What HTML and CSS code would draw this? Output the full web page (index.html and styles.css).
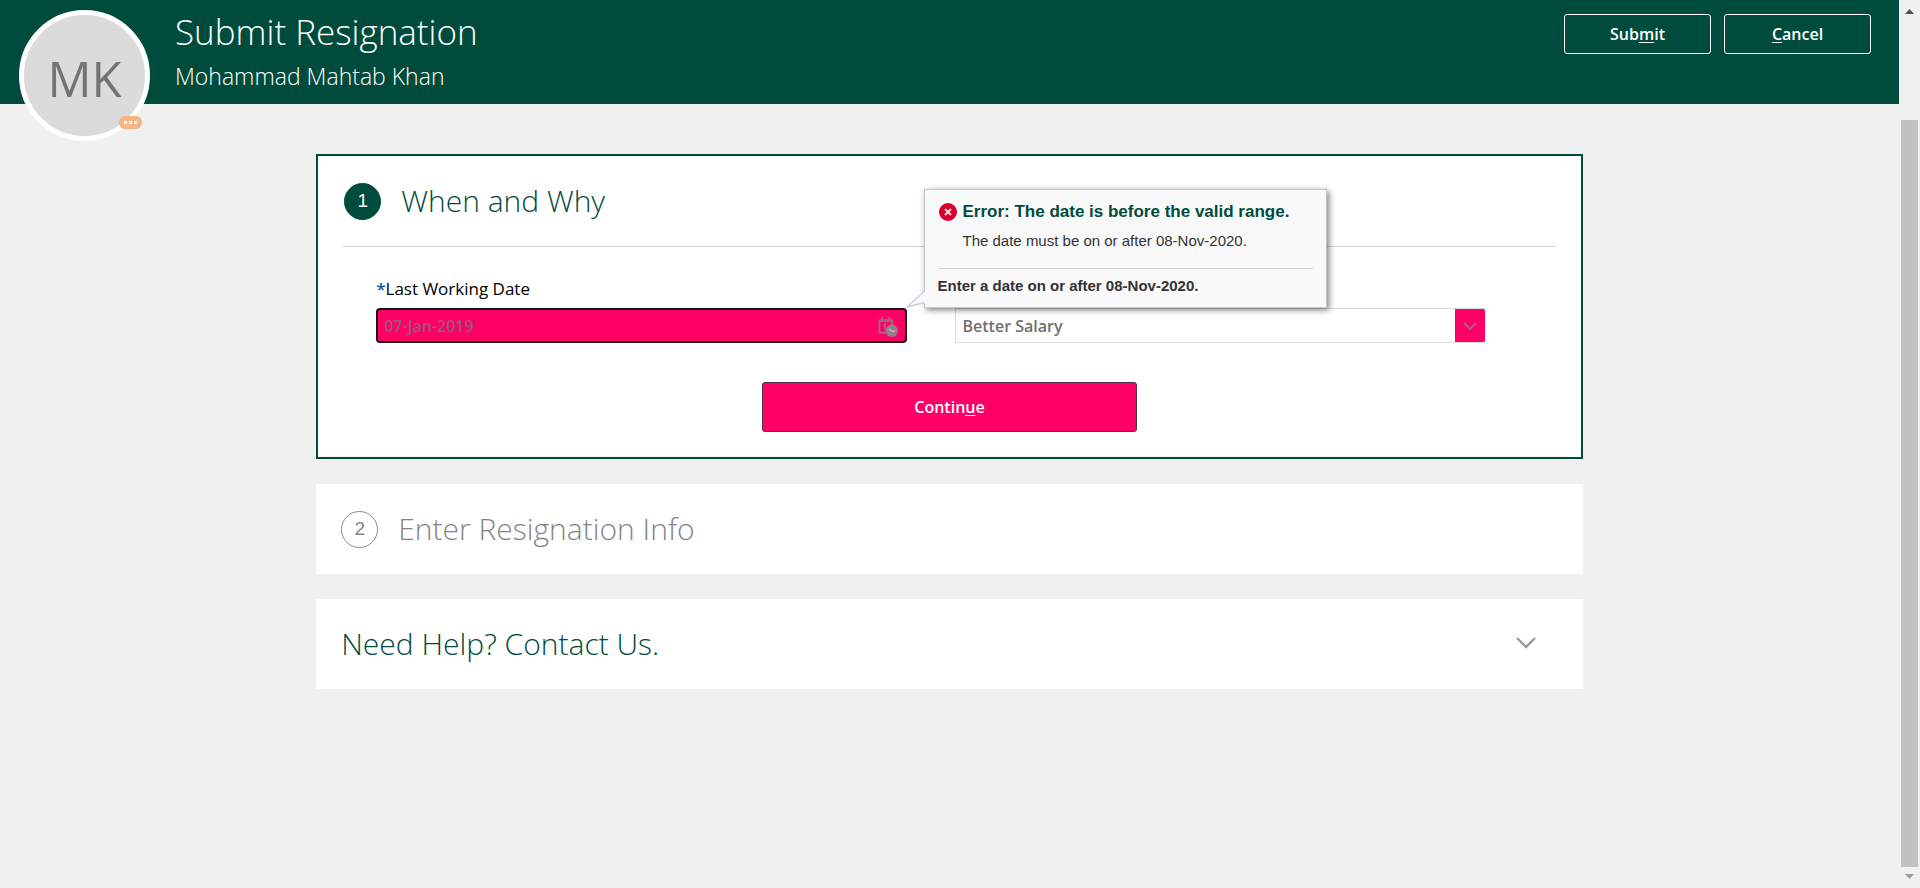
FILE: index.html
```html
<!DOCTYPE html>
<html lang="en">
<head>
<meta charset="utf-8">
<title>Submit Resignation</title>
<link rel="stylesheet" href="styles.css">
</head>
<body>
<div class="page">
  <header class="header">
    <div class="avatar">
      <span class="initials">MK</span>
      <button class="avatar-more" type="button" aria-label="More actions"><i></i><i></i><i></i></button>
    </div>
    <div class="titles">
      <h1 class="title">Submit Resignation</h1>
      <p class="person">Mohammad Mahtab Khan</p>
    </div>
    <div class="actions">
      <button class="action" type="button"><span>Sub<u>m</u>it</span></button>
      <button class="action" type="button"><span><u>C</u>ancel</span></button>
    </div>
  </header>

  <main class="content">
    <section class="card card-active">
      <div class="step-head">
        <span class="step-number step-number-active">1</span>
        <h2 class="step-title">When and Why</h2>
      </div>
      <form class="form">
        <div class="fields">
          <div class="field">
            <label class="label" for="last-date"><span class="required">*</span>Last Working Date</label>
            <div class="date-box">
              <input class="date-input" id="last-date" type="text" value="07-Jan-2019">
              <button class="date-button" type="button" aria-label="Select date">
                <svg width="21" height="21" viewBox="0 0 22 22" fill="none">
                  <path d="M2.500 4.500h13.500v13H2.500z" stroke="#a4637f" stroke-width="2"/>
                  <path d="M2 5h14.500" stroke="#a4637f" stroke-width="3"/>
                  <path d="M5.500 1v4M12.500 1v4" stroke="#a4637f" stroke-width="2.500"/>
                  <path d="M6.500 10l2-1.300V15" stroke="#a4637f" stroke-width="1.800"/>
                  <circle cx="15.500" cy="15.500" r="6.500" fill="#8d8088"/>
                  <path d="M12.500 13.500l3 2.500h3.500" stroke="#d9a9bd" stroke-width="1.500"/>
                </svg>
              </button>
              <div class="popover" role="alert">
                <svg class="popover-tip" width="20" height="18" viewBox="0 0 20 18">
                  <path d="M19 1L1 17.500L19 13z" fill="#f9f9fa"/>
                  <path d="M18.500 1L1 17L18.500 12.500" fill="none" stroke="#c8d0da" stroke-width="1.300"/>
                </svg>
                <div class="popover-message">
                  <svg class="error-icon" width="18" height="18" viewBox="0 0 18 18">
                    <circle cx="9" cy="9" r="9" fill="#d9002b"/>
                    <path d="M6 6l6 6M12 6l-6 6" stroke="#fbd5dc" stroke-width="2"/>
                  </svg>
                  <div>
                    <p class="error-title">Error: The date is before the valid range.</p>
                    <p class="error-text">The date must be on or after 08-Nov-2020.</p>
                  </div>
                </div>
                <p class="error-hint">Enter a date on or after 08-Nov-2020.</p>
              </div>
            </div>
          </div>
          <div class="field field-end">
            <div class="select-box">
              <select class="select" aria-label="Reason">
                <option>Better Salary</option>
              </select>
              <span class="select-arrow">
                <svg width="14" height="9" viewBox="0 0 14 9" fill="none"><path d="M1 1l6 6 6-6" stroke="#b35a88" stroke-width="2"/></svg>
              </span>
            </div>
          </div>
        </div>
        <button class="continue" type="button"><span>Contin<u>u</u>e</span></button>
      </form>
    </section>

    <section class="card card-row">
      <span class="step-number">2</span>
      <h2 class="step-title step-title-muted">Enter Resignation Info</h2>
    </section>

    <section class="card card-row">
      <h2 class="step-title">Need Help? Contact Us.</h2>
      <button class="expand" type="button" aria-label="Expand">
        <svg width="20" height="14" viewBox="0 0 20 14" fill="none"><path d="M1 1l9 9 9-9" stroke="#98999c" stroke-width="2.400"/></svg>
      </button>
    </section>
  </main>
</div>
<div class="scrollbar" aria-hidden="true">
  <svg width="9" height="5" viewBox="0 0 9 5"><path d="M0 5l4.500-5L9 5z" fill="#505050"/></svg>
  <div class="scroll-thumb"></div>
  <svg width="9" height="5" viewBox="0 0 9 5"><path d="M0 0l4.500 5L9 0z" fill="#a0a0a0"/></svg>
</div>
</body>
</html>
```
FILE: styles.css
```css
* {
  box-sizing: border-box;
}

body {
  margin: 0;
  display: flex;
  min-height: 100vh;
  background: #f0f0f0;
  color: #000;
  font-family: "Open Sans", "Noto Sans", sans-serif;
  font-size: 16px;
}

h1, h2, p {
  margin: 0;
  font-weight: 300;
}

button {
  font-family: inherit;
  cursor: pointer;
}

svg {
  display: block;
}

u {
  text-underline-offset: 2px;
  text-decoration-thickness: 1px;
}

.page {
  flex: 1;
  min-width: 0;
}

/* Header */
.header {
  display: flex;
  align-items: flex-start;
  height: 104px;
  padding: 0 28px 0 19px;
  background: #004c3c;
  color: #fff;
}

.avatar {
  position: relative;
  flex: none;
  display: flex;
  align-items: center;
  justify-content: center;
  width: 131px;
  height: 131px;
  margin-top: 10px;
  border: 5px solid #fff;
  border-radius: 50%;
  background: #dbdbdb;
}

.initials {
  padding-top: 4px;
  color: #737373;
  font-size: 49px;
  line-height: 64px;
}

.avatar-more {
  position: absolute;
  right: 3px;
  bottom: 7px;
  display: flex;
  align-items: center;
  justify-content: center;
  gap: 2px;
  width: 23px;
  height: 13px;
  padding: 0;
  border: 0;
  border-radius: 6px;
  background: #f7b584;
}

.avatar-more i {
  width: 3px;
  height: 3px;
  background: #fff;
}

.titles {
  flex: 1;
  padding: 8px 0 0 25px;
}

.title {
  font-size: 35px;
  line-height: 48px;
}

.person {
  margin-top: 4px;
  font-size: 23px;
  line-height: 32px;
}

.actions {
  display: flex;
  gap: 13px;
  padding-top: 14px;
}

.action {
  width: 147px;
  height: 40px;
  padding: 0;
  border: 1px solid #fff;
  border-radius: 3px;
  background: transparent;
  color: #fff;
  font-size: 16px;
  font-weight: 600;
}

/* Cards */
.content {
  display: flex;
  flex-direction: column;
  gap: 25px;
  width: 66.7%;
  margin: 0 auto;
  padding: 50px 0;
}

.card {
  background: #fff;
}

.card-active {
  padding: 25px 25px 25px;
  border: 2px solid #004c3c;
}

.card-row {
  display: flex;
  align-items: center;
  min-height: 90px;
  padding: 0 47px 0 25px;
}

.step-head {
  display: flex;
  align-items: center;
  padding: 0 0 25px 1px;
  border-bottom: 1px solid #cdcfd1;
}

.step-number {
  display: flex;
  align-items: center;
  justify-content: center;
  flex: none;
  width: 37px;
  height: 37px;
  margin-right: 20px;
  border: 1px solid #8b8b8b;
  border-radius: 50%;
  color: #858585;
  font-family: "Liberation Sans", Arial, sans-serif;
  font-size: 19px;
}

.step-number-active {
  border-color: #004c3c;
  background: #004c3c;
  color: #fff;
}

.step-title {
  color: #004c3c;
  font-size: 30px;
  line-height: 40px;
}

.step-title-muted {
  color: #858585;
}

.expand {
  margin-left: auto;
  padding: 0;
  border: 0;
  background: none;
}

/* Form */
.form {
  display: flex;
  flex-direction: column;
  align-items: center;
  padding-top: 30px;
}

.fields {
  display: grid;
  grid-template-columns: 1fr 1fr;
  gap: 48px;
  align-self: stretch;
  padding: 0 71px 0 33px;
}

.field {
  display: flex;
  flex-direction: column;
  gap: 7px;
}

.field-end {
  justify-content: flex-end;
}

.label {
  font-size: 17px;
  font-weight: 500;
  line-height: 24px;
}

.required {
  color: #0a5ca8;
  font-weight: 600;
}

.date-box {
  position: relative;
  display: flex;
  height: 35px;
  border: 2px solid #1c0a14;
  border-radius: 4px;
  background: #ff0066;
}

.date-input {
  flex: 1;
  min-width: 0;
  padding: 0 0 0 6px;
  border: 0;
  outline: 0;
  background: transparent;
  color: #a0557c;
  font: 600 16px "Open Sans", sans-serif;
}

.date-button {
  display: flex;
  align-items: center;
  padding: 2px 7px 0 0;
  border: 0;
  background: none;
}

.select-box {
  display: flex;
  position: relative;
  height: 35px;
}

.select {
  flex: 1;
  padding: 0 36px 0 7px;
  border: 1px solid #d9dbdd;
  border-radius: 0;
  background: #fff;
  color: #6f6f6f;
  font: 600 16px "Open Sans", sans-serif;
  appearance: none;
}

.select-arrow {
  position: absolute;
  top: 1px;
  right: 0;
  bottom: 1px;
  display: flex;
  align-items: center;
  justify-content: center;
  width: 30px;
  padding-top: 2px;
  border-radius: 0 2px 2px 0;
  background: #ff0066;
  pointer-events: none;
}

.continue {
  width: 375px;
  height: 50px;
  margin-top: 39px;
  padding: 0;
  border: 1px solid #4f3150;
  border-radius: 3px;
  background: #ff0066;
  color: #fff;
  font-size: 16px;
  font-weight: 600;
}

/* Error popover beside the date field */
.popover {
  position: absolute;
  left: calc(100% + 19px);
  bottom: calc(100% + 2px);
  z-index: 1;
  width: 403px;
  padding: 12px 13px 11px;
  border: 1px solid #bfc6cc;
  background: #f9f9fa;
  box-shadow: 2px 2px 6px rgba(0, 0, 0, 0.5);
  color: #333;
  font-family: "Liberation Sans", Arial, sans-serif;
}

.popover-tip {
  position: absolute;
  left: -19px;
  bottom: -1px;
}

.popover-message {
  display: flex;
  gap: 6px;
  padding-bottom: 17px;
  border-bottom: 1px solid #cfd5dc;
}

.error-icon {
  flex: none;
  margin: 1px 0 0 1px;
}

.error-title {
  color: #004c3c;
  font-size: 17px;
  font-weight: 700;
  line-height: 20px;
}

.error-text {
  margin-top: 9px;
  font-size: 15px;
  line-height: 20px;
}

.error-hint {
  margin-top: 7px;
  font-size: 15px;
  font-weight: 700;
  line-height: 20px;
}

/* Scrollbar */
.scrollbar {
  position: sticky;
  top: 0;
  display: flex;
  flex-direction: column;
  align-items: center;
  flex: none;
  width: 21px;
  height: 100vh;
  padding: 9px 0;
}

.scroll-thumb {
  flex: 1;
  width: 17px;
  margin: 106px 0 7px;
  background: #c1c1c1;
}
```
